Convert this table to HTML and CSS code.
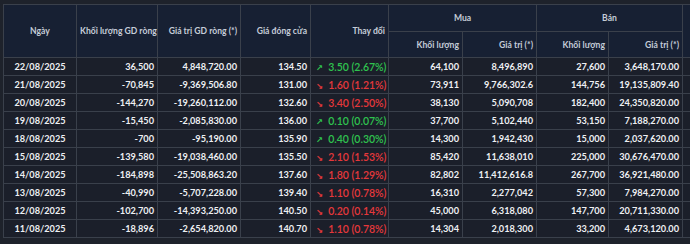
FILE: index.html
```html
<!DOCTYPE html>
<html lang="vi">
<head>
  <meta charset="UTF-8">
  <meta name="viewport" content="width=device-width, initial-scale=1.0">
  <title>Giao dịch khối ngoại</title>
  <link rel="stylesheet" href="styles.css">
</head>
<body>

<div class="wrap">
  <table class="trades">
    <colgroup>
      <col class="c-date">
      <col class="c-vol">
      <col class="c-val">
      <col class="c-close">
      <col class="c-chg">
      <col class="c-bvol">
      <col class="c-bval">
      <col class="c-svol">
      <col class="c-sval">
      <col class="c-more">
    </colgroup>
    <thead>
      <tr class="head-top">
        <th rowspan="2" class="center">Ngày</th>
        <th rowspan="2">Khối lượng GD ròng</th>
        <th rowspan="2">Giá trị GD ròng (*)</th>
        <th rowspan="2">Giá đóng cửa</th>
        <th rowspan="2">Thay đổi</th>
        <th colspan="2" class="center">Mua</th>
        <th colspan="2" class="center">Bán</th>
        <th rowspan="2"></th>
      </tr>
      <tr class="head-sub">
        <th>Khối lượng</th>
        <th>Giá trị (*)</th>
        <th>Khối lượng</th>
        <th>Giá trị (*)</th>
      </tr>
    </thead>
    <tbody>
      <tr>
        <td class="center">22/08/2025</td><td>36,500</td><td>4,848,720.00</td><td>134.50</td>
        <td class="chg up"><span class="arrow">↗</span>3.50 (2.67%)</td>
        <td>64,100</td><td>8,496,890</td><td>27,600</td><td>3,648,170.00</td><td></td>
      </tr>
      <tr>
        <td class="center">21/08/2025</td><td>-70,845</td><td>-9,369,506.80</td><td>131.00</td>
        <td class="chg down"><span class="arrow">↘</span>1.60 (1.21%)</td>
        <td>73,911</td><td>9,766,302.6</td><td>144,756</td><td>19,135,809.40</td><td></td>
      </tr>
      <tr>
        <td class="center">20/08/2025</td><td>-144,270</td><td>-19,260,112.00</td><td>132.60</td>
        <td class="chg down"><span class="arrow">↘</span>3.40 (2.50%)</td>
        <td>38,130</td><td>5,090,708</td><td>182,400</td><td>24,350,820.00</td><td></td>
      </tr>
      <tr>
        <td class="center">19/08/2025</td><td>-15,450</td><td>-2,085,830.00</td><td>136.00</td>
        <td class="chg up"><span class="arrow">↗</span>0.10 (0.07%)</td>
        <td>37,700</td><td>5,102,440</td><td>53,150</td><td>7,188,270.00</td><td></td>
      </tr>
      <tr>
        <td class="center">18/08/2025</td><td>-700</td><td>-95,190.00</td><td>135.90</td>
        <td class="chg up"><span class="arrow">↗</span>0.40 (0.30%)</td>
        <td>14,300</td><td>1,942,430</td><td>15,000</td><td>2,037,620.00</td><td></td>
      </tr>
      <tr>
        <td class="center">15/08/2025</td><td>-139,580</td><td>-19,038,460.00</td><td>135.50</td>
        <td class="chg down"><span class="arrow">↘</span>2.10 (1.53%)</td>
        <td>85,420</td><td>11,638,010</td><td>225,000</td><td>30,676,470.00</td><td></td>
      </tr>
      <tr>
        <td class="center">14/08/2025</td><td>-184,898</td><td>-25,508,863.20</td><td>137.60</td>
        <td class="chg down"><span class="arrow">↘</span>1.80 (1.29%)</td>
        <td>82,802</td><td>11,412,616.8</td><td>267,700</td><td>36,921,480.00</td><td></td>
      </tr>
      <tr>
        <td class="center">13/08/2025</td><td>-40,990</td><td>-5,707,228.00</td><td>139.40</td>
        <td class="chg down"><span class="arrow">↘</span>1.10 (0.78%)</td>
        <td>16,310</td><td>2,277,042</td><td>57,300</td><td>7,984,270.00</td><td></td>
      </tr>
      <tr>
        <td class="center">12/08/2025</td><td>-102,700</td><td>-14,393,250.00</td><td>140.50</td>
        <td class="chg down"><span class="arrow">↘</span>0.20 (0.14%)</td>
        <td>45,000</td><td>6,318,080</td><td>147,700</td><td>20,711,330.00</td><td></td>
      </tr>
      <tr>
        <td class="center">11/08/2025</td><td>-18,896</td><td>-2,654,820.00</td><td>140.70</td>
        <td class="chg down"><span class="arrow">↘</span>1.10 (0.78%)</td>
        <td>14,304</td><td>2,018,300</td><td>33,200</td><td>4,673,120.00</td><td></td>
      </tr>
    </tbody>
  </table>
</div>

</body>
</html>
```

FILE: styles.css
```css
html, body {
  margin: 0;
  background: #1e222b;
  overflow: hidden;
}
body {
  font-family: Lato, 'Open Sans', sans-serif;
  color: #eef0f3;
}
.wrap {
  padding: 4px 0 0 3px;
  width: 720px;
}
.trades {
  border-collapse: collapse;
  table-layout: fixed;
  width: 700px;
  font-size: 9.2px;
}
.c-date { width: 73px; }
.c-vol { width: 81px; }
.c-val { width: 83px; }
.c-close { width: 70px; }
.c-chg { width: 78px; }
.c-bvol { width: 74px; }
.c-bval { width: 74px; }
.c-svol { width: 72px; }
.c-sval { width: 74px; }
.c-more { width: 21px; }
th, td {
  border: 1px solid #3a404b;
  padding: 0 3px;
  text-align: right;
  white-space: nowrap;
  overflow: hidden;
}
th {
  background: #172033;
  color: #c5ccd8;
  font-weight: 700;
  font-size: 8.6px;
}
.head-top th {
  height: 26px;
}
.head-sub th {
  height: 25px;
}
td {
  background: #1b1f2a;
  height: 17px;
  font-weight: 700;
}
.center {
  text-align: center;
}
.chg {
  text-align: left;
  padding-left: 5px;
  font-size: 10.5px;
  font-weight: 600;
}
.arrow {
  font-family: 'DejaVu Sans', sans-serif;
  font-size: 8.5px;
  margin-right: 5px;
}
.up { color: #2fc24f; }
.down { color: #e5383b; }
```
